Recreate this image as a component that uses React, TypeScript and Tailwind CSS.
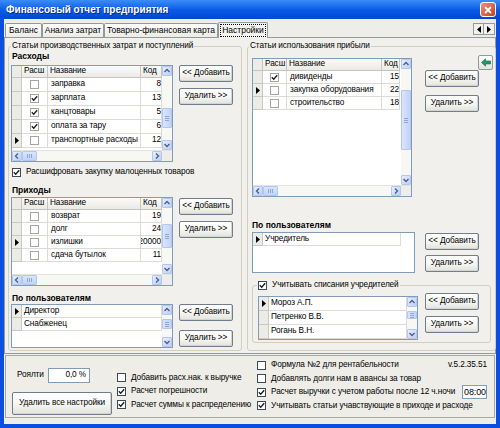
import React from 'react';

type Row = { on?: boolean; name: string; code: string; cur?: boolean };
type Dir = 'up' | 'down' | 'left' | 'right';

const Check = ({ on, light = false }: { on?: boolean; light?: boolean }) => (
  <span
    className={`flex w-[9px] h-[9px] shrink-0 items-center justify-center bg-white border ${
      light ? 'border-[#a4a4a0]' : 'border-[#3d4a58]'
    }`}
  >
    {on && (
      <svg width="7" height="7" viewBox="0 0 7 7">
        <path d="M0.8 3.3 L2.7 5.2 L6.2 1.3" fill="none" stroke="#1e1e1e" strokeWidth="1.4" />
      </svg>
    )}
  </span>
);

const Chev = ({ dir }: { dir: Dir }) => {
  const d = {
    up: 'M1.5 5 L4 2.5 L6.5 5',
    down: 'M1.5 3 L4 5.5 L6.5 3',
    left: 'M5 1.5 L2.5 4 L5 6.5',
    right: 'M3 1.5 L5.5 4 L3 6.5',
  }[dir];
  return (
    <svg width="8" height="8" viewBox="0 0 8 8">
      <path d={d} fill="none" stroke="#4d6185" strokeWidth="1.4" />
    </svg>
  );
};

const ScrollBtn = ({ dir }: { dir: Dir }) => (
  <div className="w-[10px] h-[10px] shrink-0 flex items-center justify-center rounded-[1px] border border-[#b4c6ee] bg-linear-to-br from-[#e8effe] to-[#bccff8]">
    <Chev dir={dir} />
  </div>
);

const VScroll = ({ thumb }: { thumb: string }) => (
  <div className="w-[10px] shrink-0 flex flex-col bg-[#f7f7f3]">
    <ScrollBtn dir="up" />
    <div className="flex-1 flex flex-col">
      <div
        className={`shrink-0 rounded-[1px] border border-[#b4c6ee] bg-linear-to-r from-[#dae5fd] to-[#c2d3f9] flex flex-col items-center justify-center gap-[1px] ${thumb}`}
      >
        <span className="w-[4px] h-px bg-[#8ea6dc]" />
        <span className="w-[4px] h-px bg-[#8ea6dc]" />
        <span className="w-[4px] h-px bg-[#8ea6dc]" />
      </div>
    </div>
    <ScrollBtn dir="down" />
  </div>
);

const HScroll = () => (
  <div className="flex h-[11px] shrink-0 bg-[#f7f7f3] border-t border-[#e4e4de]">
    <ScrollBtn dir="left" />
    <div className="w-[15px] h-[10px] shrink-0 rounded-[1px] border border-[#b4c6ee] bg-linear-to-b from-[#dae5fd] to-[#c2d3f9] flex items-center justify-center gap-[1px]">
      <span className="w-px h-[4px] bg-[#8ea6dc]" />
      <span className="w-px h-[4px] bg-[#8ea6dc]" />
      <span className="w-px h-[4px] bg-[#8ea6dc]" />
    </div>
    <div className="flex-1" />
    <ScrollBtn dir="right" />
    <div className="w-[10px] shrink-0 bg-[#eeede8]" />
  </div>
);

const Indicator = ({ cur }: { cur?: boolean }) => (
  <div className="w-[10px] shrink-0 h-full flex items-center justify-center bg-[#ecebe6] border-r border-b border-[#c9c9c3]">
    {cur && (
      <svg width="4" height="7" viewBox="0 0 4 7">
        <path d="M0 0 L4 3.5 L0 7 Z" fill="#000" />
      </svg>
    )}
  </div>
);

const HCell = ({ w, children }: { w: string; children?: React.ReactNode }) => (
  <div
    className={`${w} shrink-0 h-full flex items-center px-[2px] border-r border-b border-[#c5c5bf] bg-linear-to-b from-[#fbfbf9] to-[#ebeae4]`}
  >
    {children}
  </div>
);

function DataGrid({
  size,
  cols,
  rows,
  rowH,
  thumb,
}: {
  size: string;
  cols: [string, string, string];
  rows: Row[];
  rowH: string;
  thumb: string;
}) {
  return (
    <div className={`border border-[#7f9db9] bg-white flex flex-col shrink-0 ${size}`}>
      <div className="flex flex-1 min-h-0">
        <div className="flex-1 min-w-0 flex flex-col overflow-hidden">
          <div className="flex h-[12px] shrink-0">
            <div className="w-[10px] shrink-0 h-full border-r border-b border-[#c5c5bf] bg-[#ecebe6]" />
            <HCell w={cols[0]}>Расш</HCell>
            <HCell w={cols[1]}>Название</HCell>
            <HCell w={cols[2]}>Код</HCell>
          </div>
          {rows.map((r) => (
            <div key={r.name} className={`flex shrink-0 ${rowH}`}>
              <Indicator cur={r.cur} />
              <div className={`${cols[0]} shrink-0 h-full flex items-center justify-center border-r border-b border-[#dcdcd6]`}>
                <Check on={r.on} light />
              </div>
              <div className={`${cols[1]} shrink-0 h-full flex items-center px-[3px] border-r border-b border-[#dcdcd6] whitespace-nowrap overflow-hidden`}>
                {r.name}
              </div>
              <div className={`${cols[2]} shrink-0 h-full flex items-center justify-end border-r border-b border-[#dcdcd6] whitespace-nowrap overflow-hidden`}>
                {r.code}
              </div>
            </div>
          ))}
        </div>
        <VScroll thumb={thumb} />
      </div>
      <HScroll />
    </div>
  );
}

function NameList({
  size,
  items,
  rowH,
  nameW,
  thumb,
}: {
  size: string;
  items: string[];
  rowH: string;
  nameW: string;
  thumb?: string;
}) {
  return (
    <div className={`border border-[#7f9db9] bg-white flex shrink-0 ${size}`}>
      <div className="flex-1 min-w-0 flex flex-col">
        {items.map((n, i) => (
          <div key={n} className={`flex shrink-0 ${rowH}`}>
            <Indicator cur={i === 0} />
            <div className={`${nameW} h-full flex items-center px-[2px] border-r border-b border-[#dcdcd6] whitespace-nowrap`}>
              {n}
            </div>
          </div>
        ))}
      </div>
      {thumb && <VScroll thumb={thumb} />}
    </div>
  );
}

const Btn = ({ children, className = '' }: { children: React.ReactNode; className?: string }) => (
  <div
    className={`flex items-center justify-center shrink-0 border border-[#6f7d8e] rounded-[2px] bg-linear-to-b from-white via-[#f7f7f4] to-[#e3e3dc] shadow-[inset_-1px_-1px_0_#d6d5cc] whitespace-nowrap ${className}`}
  >
    {children}
  </div>
);

const BtnPair = ({ gap, top = '' }: { gap: string; top?: string }) => (
  <div className={`flex flex-col w-[54px] ${gap} ${top}`}>
    <Btn className="h-[17px]">&lt;&lt; Добавить</Btn>
    <Btn className="h-[17px]">Удалить &gt;&gt;</Btn>
  </div>
);

const CheckLine = ({ on, children, h = 'h-[13.5px]' }: { on?: boolean; children: React.ReactNode; h?: string }) => (
  <div className={`flex items-center gap-[5px] whitespace-nowrap ${h}`}>
    <Check on={on} />
    <span>{children}</span>
  </div>
);

const rashody: Row[] = [
  { name: 'заправка', code: '8' },
  { name: 'зарплата', code: '13', on: true },
  { name: 'канцтовары', code: '5', on: true },
  { name: 'оплата за тару', code: '6', on: true },
  { name: 'транспортные расходы', code: '12', cur: true },
];

const prihody: Row[] = [
  { name: 'возврат', code: '19' },
  { name: 'долг', code: '24' },
  { name: 'излишки', code: '20000', cur: true },
  { name: 'сдача бутылок', code: '11' },
];

const pribyl: Row[] = [
  { name: 'дивиденды', code: '15', on: true },
  { name: 'закупка оборудования', code: '22', cur: true },
  { name: 'строительство', code: '18' },
];

const tabs = [
  { t: 'Баланс', w: 'w-[37px]' },
  { t: 'Анализ затрат', w: 'w-[62px]' },
  { t: 'Товарно-финансовая карта', w: 'w-[114px]' },
];

export default function App() {
  return (
    <div className="w-[500px] h-[428px] flex flex-col bg-[#0a4fe0] overflow-hidden font-['Liberation_Sans',Arial,sans-serif] text-[8.25px] tracking-[-0.1px] leading-none text-black">
      {/* title bar */}
      <div className="h-[19px] shrink-0 flex items-center pl-[6px] pr-[4px] bg-linear-to-b from-[#3b8cf8] via-[#0a5de9] to-[#0346d3]">
        <span className="text-white font-bold text-[10px] tracking-normal [text-shadow:1px_1px_0_#0a2a8c]">
          Финансовый отчет предприятия
        </span>
        <div className="ml-auto w-[16px] h-[15px] rounded-[3px] border border-white bg-linear-to-br from-[#ec9077] to-[#c4401d] flex items-center justify-center">
          <svg width="8" height="8" viewBox="0 0 8 8">
            <path d="M1 1 L7 7 M7 1 L1 7" stroke="#fff" strokeWidth="1.8" />
          </svg>
        </div>
      </div>

      <div className="flex-1 mx-[4px] mb-[4px] bg-[#eeede8] flex flex-col">
        {/* tabs */}
        <div className="h-[18px] shrink-0 flex items-end pl-[1px] text-[8.5px] tracking-normal">
          {tabs.map((t) => (
            <div
              key={t.t}
              className={`${t.w} h-[14px] shrink-0 flex items-center justify-center border-t border-l border-r border-[#919b9c] rounded-t-[2px] bg-linear-to-b from-white to-[#ecebe5] whitespace-nowrap`}
            >
              {t.t}
            </div>
          ))}
          <div className="w-[50px] h-[16px] shrink-0 -mb-px z-10 flex items-center justify-center border-t border-l border-r border-[#919b9c] rounded-t-[2px] bg-[#f4f3ee]">
            <span className="border border-dotted border-black px-[1px] py-[1px]">Настройки</span>
          </div>
          <div className="ml-auto mb-[2px] mr-[1px] flex">
            <div className="w-[11px] h-[12px] flex items-center justify-center border border-[#919b9c] bg-[#f1f0eb]">
              <svg width="4" height="7" viewBox="0 0 4 7">
                <path d="M4 0 L0 3.5 L4 7 Z" fill="#000" />
              </svg>
            </div>
            <div className="w-[11px] h-[12px] flex items-center justify-center border border-l-0 border-[#919b9c] bg-[#f1f0eb]">
              <svg width="4" height="7" viewBox="0 0 4 7">
                <path d="M0 0 L4 3.5 L0 7 Z" fill="#000" />
              </svg>
            </div>
          </div>
        </div>

        {/* tab page */}
        <div className="h-[317px] shrink-0 border border-[#919b9c] bg-[#f1f0ec] flex gap-[5px] pl-[3px] pt-[3px]">
          {/* left group */}
          <fieldset className="w-[234px] h-[310px] shrink-0 border border-[#d0d0bf] rounded-[3px] px-[2px]">
            <legend className="px-[1px] leading-[10px]">Статьи производственных затрат и поступлений</legend>
            <div className="h-[10px] leading-[10px] pl-[1px] font-bold text-[8.5px] tracking-normal">Расходы</div>
            <div className="flex mt-[4px]">
              <DataGrid
                size="w-[162px] h-[97px]"
                cols={['w-[26px]', 'w-[93px]', 'w-[21px]']}
                rows={rashody}
                rowH="h-[14px]"
                thumb="mt-[32px] h-[20px]"
              />
              <BtnPair gap="gap-[6px]" top="ml-[6px]" />
            </div>
            <div className="mt-[5px] h-[10px] pl-[1px] flex items-center gap-[5px]">
              <Check on />
              <span>Расшифровать закупку малоценных товаров</span>
            </div>
            <div className="mt-[8px] h-[10px] leading-[10px] pl-[1px] font-bold text-[8.5px] tracking-normal">Приходы</div>
            <div className="flex mt-[2px]">
              <DataGrid
                size="w-[162px] h-[89px]"
                cols={['w-[26px]', 'w-[93px]', 'w-[21px]']}
                rows={prihody}
                rowH="h-[13px]"
                thumb="mt-[16px] h-[24px]"
              />
              <BtnPair gap="gap-[6px]" top="ml-[6px] mt-[1px]" />
            </div>
            <div className="mt-[7px] h-[10px] leading-[10px] pl-[1px] font-bold text-[8.5px] tracking-normal">
              По пользователям
            </div>
            <div className="flex mt-[1px]">
              <NameList
                size="w-[162px] h-[44px]"
                items={['Директор', 'Снабженец']}
                rowH="h-[13px]"
                nameW="flex-1"
                thumb="mt-[4px] h-[10px]"
              />
              <BtnPair gap="gap-[9px]" top="ml-[6px]" />
            </div>
          </fieldset>

          {/* right group */}
          <fieldset className="relative w-[246px] h-[310px] shrink-0 border border-[#d0d0bf] rounded-[3px] px-[4px]">
            <legend className="-ml-[3px] px-[1px] leading-[10px]">Статьи использования прибыли</legend>
            <div className="absolute top-[4px] right-[2px] w-[15px] h-[15px] flex items-center justify-center border border-[#8d99a8] rounded-[2px] bg-linear-to-b from-white to-[#e4e4dd]">
              <svg width="10" height="9" viewBox="0 0 10 9">
                <path d="M0.5 4.5 L4.5 0.8 L4.5 3 L9.5 3 L9.5 6 L4.5 6 L4.5 8.2 Z" fill="#1f9a6a" stroke="#0b6b45" strokeWidth="0.6" />
              </svg>
            </div>
            <div className="flex mt-[7px]">
              <DataGrid
                size="w-[160px] h-[139px]"
                cols={['w-[24px]', 'w-[95px]', 'w-[18px]']}
                rows={pribyl}
                rowH="h-[13px]"
                thumb="mt-[21px] h-[60px]"
              />
              <BtnPair gap="gap-[8px]" top="ml-[13px] mt-[12px]" />
            </div>
            <div className="mt-[23px] h-[10px] leading-[10px] font-bold text-[8.5px] tracking-normal">По пользователям</div>
            <div className="flex mt-[2px]">
              <NameList size="w-[163px] h-[41px]" items={['Учредитель']} rowH="h-[13px]" nameW="w-[138px]" />
              <BtnPair gap="gap-[5px]" top="ml-[10px] mt-[1px]" />
            </div>
            <fieldset className="mt-[7px] w-[239px] h-[63px] border border-[#d0d0bf] rounded-[3px] px-[5px]">
              <legend className="-ml-[1px] px-[1px]">
                <div className="h-[10px] flex items-center gap-[5px]">
                  <Check on />
                  <span>Учитывать списания учредителей</span>
                </div>
              </legend>
              <div className="flex items-start mt-[6px]">
                <NameList
                  size="w-[160px] h-[44px]"
                  items={['Мороз А.П.', 'Петренко В.В.', 'Рогань В.Н.']}
                  rowH="h-[14px]"
                  nameW="flex-1"
                  thumb="mt-[4px] h-[8px]"
                />
                <BtnPair gap="gap-[6px]" top="ml-[7px] -mt-[3px]" />
              </div>
            </fieldset>
          </fieldset>
        </div>

        {/* bottom panel */}
        <div className="mt-px mx-px h-[63px] shrink-0 border border-[#a9a99f] flex">
          <div className="w-[100px] ml-[6px] shrink-0 flex flex-col">
            <div className="mt-[12px] h-[15px] flex items-center">
              <span className="w-[36px] pl-[5px]">Роялти</span>
              <div className="w-[42px] h-[15px] border border-[#7f9db9] bg-white flex items-center justify-end pr-[3px]">
                0,0 %
              </div>
            </div>
            <Btn className="mt-[9px] h-[23px] w-[100px]">Удалить все настройки</Btn>
          </div>
          <div className="w-[135px] ml-[5px] shrink-0 pt-[15px] flex flex-col">
            <CheckLine>Добавить расх.нак. к выручке</CheckLine>
            <CheckLine on>Расчет погрешности</CheckLine>
            <CheckLine on>Расчет суммы к распределению</CheckLine>
          </div>
          <div className="flex-1 ml-[5px] pr-[7px] pt-[2.5px] flex flex-col">
            <div className="flex items-center h-[13.5px]">
              <CheckLine>Формула №2 для рентабельности</CheckLine>
              <span className="ml-auto">v.5.2.35.51</span>
            </div>
            <CheckLine>Добавлять долги нам в авансы за товар</CheckLine>
            <div className="flex items-center h-[13.5px]">
              <CheckLine on>Расчет выручки с учетом работы после 12 ч.ночи</CheckLine>
              <div className="ml-auto w-[25px] h-[14px] border border-[#7f9db9] bg-white flex items-center pl-[1px] text-[9px]">
                08:00
              </div>
            </div>
            <CheckLine on>Учитывать статьи учавствующие в приходе и расходе</CheckLine>
          </div>
        </div>
      </div>
    </div>
  );
}
